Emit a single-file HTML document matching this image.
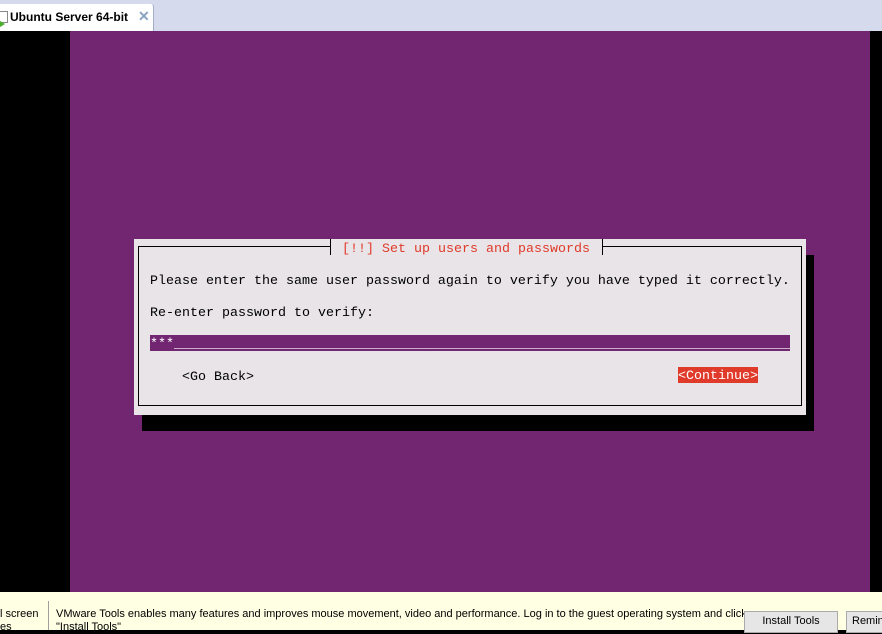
<!DOCTYPE html>
<html><head><style>
*{margin:0;padding:0;box-sizing:border-box}
body{width:882px;height:630px;overflow:hidden;position:relative;background:#000;font-family:"Liberation Mono",monospace}
.a{position:absolute}
.m{font-family:"Liberation Mono",monospace;font-size:13.33px;line-height:16px;white-space:pre;color:#000}
.s{font-family:"Liberation Sans",sans-serif;font-size:12px;color:#000}
</style></head><body>
<div class="a" style="left:0;top:0;width:882px;height:31px;background:#d5dbec"></div>
<div class="a" style="left:0;top:4px;width:154px;height:27px;background:#fff;border-right:1px solid #9fb0c8;border-top-right-radius:3px"></div>
<div class="a" style="left:-2px;top:11px;width:10px;height:12px;border:1px solid #888;background:#fff"></div>
<div class="a" style="left:-3px;top:19px;width:0;height:0;border-left:8px solid #4caf30;border-top:5px solid transparent;border-bottom:5px solid transparent"></div>
<div class="a s" style="left:10px;top:10px;font-weight:bold;font-size:12px">Ubuntu Server 64-bit</div>
<div class="a s" style="left:138px;top:8px;color:#8aa3c0;font-weight:bold;font-size:14px">✕</div>
<div class="a" style="left:70px;top:31px;width:800px;height:561px;background:#722570"></div>
<div class="a" style="left:142px;top:255px;width:672px;height:176px;background:#000"></div>
<div class="a" style="left:134px;top:239px;width:672px;height:176px;background:#e8e4e8"></div>
<div class="a" style="left:138px;top:246px;width:664px;height:160px;border:1px solid #000;border-top:none"></div>
<div class="a" style="left:138px;top:246px;width:192px;height:1px;background:#000"></div>
<div class="a" style="left:602px;top:246px;width:200px;height:1px;background:#000"></div>
<div class="a" style="left:330px;top:239px;width:1px;height:16px;background:#000"></div>
<div class="a" style="left:602px;top:239px;width:1px;height:16px;background:#000"></div>
<div class="a m" style="left:342px;top:242px;color:#e03a2a">[!!] Set up users and passwords</div>
<div class="a m" style="left:150px;top:274px">Please enter the same user password again to verify you have typed it correctly.</div>
<div class="a m" style="left:150px;top:306px">Re-enter password to verify:</div>
<div class="a" style="left:150px;top:335px;width:640px;height:16px;background:#722570"></div>
<div class="a m" style="left:150px;top:337px;color:#fff;overflow:hidden;width:640px">***_____________________________________________________________________________</div>
<div class="a m" style="left:182px;top:370px">&lt;Go Back&gt;</div>
<div class="a" style="left:678px;top:367px;width:80px;height:16px;background:#e03a2a"></div>
<div class="a m" style="left:678px;top:369px;color:#fff">&lt;Continue&gt;</div>
<div class="a" style="left:0;top:592px;width:882px;height:38px;background:#ffffe4"></div>
<div class="a" style="left:48px;top:601px;width:1px;height:29px;background:#a0a0a0"></div>
<div class="a s" style="left:0;top:608px;line-height:13px;font-size:11px">l screen<br>es</div>
<div class="a s" style="left:56px;top:608px;line-height:13px;font-size:11px;white-space:nowrap">VMware Tools enables many features and improves mouse movement, video and performance. Log in to the guest operating system and click<br>"Install Tools"</div>
<div class="a s" style="left:744px;top:611px;width:94px;height:22px;background:#e6e6e6;border:1px solid #aaa;text-align:center;line-height:18px;font-size:11px">Install Tools</div>
<div class="a s" style="left:846px;top:611px;width:50px;height:22px;background:#e6e6e6;border:1px solid #aaa;padding-left:5px;line-height:18px;font-size:11px">Remind</div>
</body></html>
